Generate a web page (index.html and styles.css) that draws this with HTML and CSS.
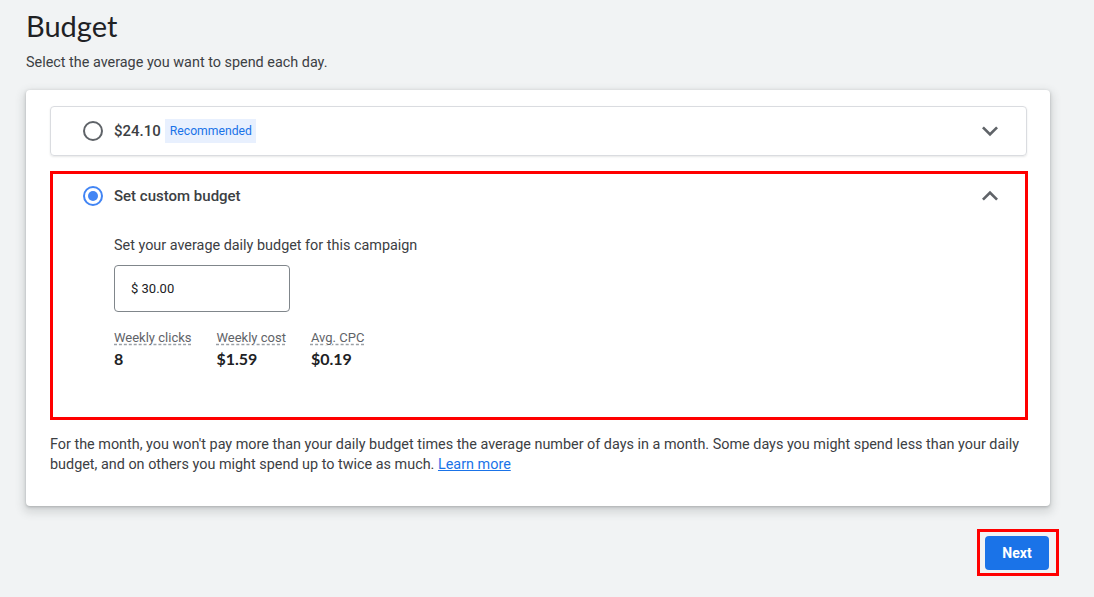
FILE: index.html
```html
<!DOCTYPE html>
<html lang="en">
<head>
  <meta charset="UTF-8" />
  <title>Budget</title>
  <link rel="stylesheet" href="styles.css">
</head>
<body>
  <div class="page">
    <h1 class="title">Budget</h1>
    <p class="subtitle">Select the average you want to spend each day.</p>

    <div class="card">
      <div class="option">
        <span class="radio"></span>
        <span class="option-label">$24.10</span>
        <span class="chip">Recommended</span>
        <svg class="chevron" viewBox="0 0 24 24"><path d="M16.59 8.59L12 13.17 7.41 8.59 6 10l6 6 6-6z"/></svg>
      </div>

      <div class="panel">
        <div class="panel-head">
          <span class="radio checked"></span>
          <span class="option-label">Set custom budget</span>
          <svg class="chevron" viewBox="0 0 24 24"><path d="M12 8l-6 6 1.41 1.41L12 10.83l4.59 4.58L18 14z"/></svg>
        </div>
        <div class="panel-body">
          <p class="hint">Set your average daily budget for this campaign</p>
          <div class="amount">$ 30.00</div>
          <div class="stats">
            <div class="stat">
              <span class="stat-label">Weekly clicks</span>
              <span class="stat-value">8</span>
            </div>
            <div class="stat">
              <span class="stat-label">Weekly cost</span>
              <span class="stat-value">$1.59</span>
            </div>
            <div class="stat">
              <span class="stat-label">Avg. CPC</span>
              <span class="stat-value">$0.19</span>
            </div>
          </div>
        </div>
      </div>

      <p class="note">For the month, you won't pay more than your daily budget times the average number of days in a month. Some days you might spend less than your daily budget, and on others you might spend up to twice as much. <a href="#">Learn more</a></p>
    </div>

    <div class="actions">
      <div class="highlight">
        <button class="next">Next</button>
      </div>
    </div>
  </div>
</body>
</html>
```

FILE: styles.css
```css
body {
  margin: 0;
  background-color: #f1f3f4;
  font-family: Roboto, 'Liberation Sans', sans-serif;
  color: #3c4043;
}
.page {
  padding: 8px 35px 0 26px;
}
.title {
  font-family: Lato, Roboto, sans-serif;
  font-weight: 400;
  font-size: 29px;
  line-height: 36px;
  color: #202124;
  margin: 0;
}
.subtitle {
  font-size: 14.4px;
  line-height: 20px;
  margin: 9px 0 0;
}
.card {
  background: #fff;
  margin: 17px 9px 0 0;
  padding: 16px 23px 31px 24px;
  border-radius: 4px;
  box-shadow: 0 1px 3px rgba(60, 64, 67, 0.3), 0 4px 8px 3px rgba(60, 64, 67, 0.15);
}
.option {
  display: flex;
  align-items: center;
  height: 48px;
  padding: 0 20px 0 32px;
  border: 1px solid #dadce0;
  border-radius: 4px;
  box-shadow: 0 1px 2px rgba(60, 64, 67, 0.12);
}
.radio {
  width: 16px;
  height: 16px;
  border: 2px solid #5f6368;
  border-radius: 50%;
  margin-right: 11px;
  flex-shrink: 0;
  position: relative;
}
.radio.checked {
  border-color: #4285f4;
}
.radio.checked::after {
  content: "";
  position: absolute;
  left: 3px;
  top: 3px;
  width: 10px;
  height: 10px;
  border-radius: 50%;
  background: #4285f4;
}
.option-label {
  font-size: 15px;
  font-weight: 500;
  color: #3c4043;
}
.chip {
  margin-left: 4px;
  background: #e8f0fe;
  color: #1a73e8;
  font-size: 12.2px;
  line-height: 24px;
  padding: 0 4px 0 5px;
}
.chevron {
  width: 32px;
  height: 32px;
  fill: #5f6368;
  margin-left: auto;
}
.panel {
  margin-top: 15px;
  margin-right: -1px;
  border: 3px solid #ff0000;
  padding: 0 19px 48px 30px;
}
.panel-head {
  display: flex;
  align-items: center;
  height: 44px;
}
.panel-body {
  padding-left: 31px;
}
.hint {
  font-size: 14.4px;
  line-height: 20px;
  margin: 18px 0 0;
}
.amount {
  margin-top: 9px;
  width: 158px;
  height: 45px;
  border: 1px solid #80868b;
  border-radius: 4px;
  padding-left: 16px;
  display: flex;
  align-items: center;
  font-size: 13px;
  color: #202124;
}
.stats {
  display: flex;
  gap: 25px;
  margin-top: 18px;
}
.stat {
  display: flex;
  flex-direction: column;
}
.stat-label {
  font-size: 13px;
  line-height: 16px;
  color: #5f6368;
  text-decoration: underline dashed #9aa0a6;
  text-underline-offset: 2px;
}
.stat-value {
  font-family: Lato, Roboto, sans-serif;
  font-weight: 700;
  font-size: 16px;
  line-height: 20px;
  margin-top: 3px;
  color: #202124;
}
.note {
  font-size: 14.4px;
  line-height: 20px;
  margin: 15px 0 0;
}
.note a {
  color: #1a73e8;
}
.actions {
  display: flex;
  justify-content: flex-end;
  margin-top: 23px;
}
.highlight {
  border: 3px solid #ff0000;
  padding: 4px 7px 3px 5px;
}
.next {
  display: block;
  width: 64px;
  height: 34px;
  border: none;
  border-radius: 4px;
  background-color: #1a73e8;
  color: #fff;
  font-family: Roboto, sans-serif;
  font-size: 14px;
  font-weight: 700;
}
```
